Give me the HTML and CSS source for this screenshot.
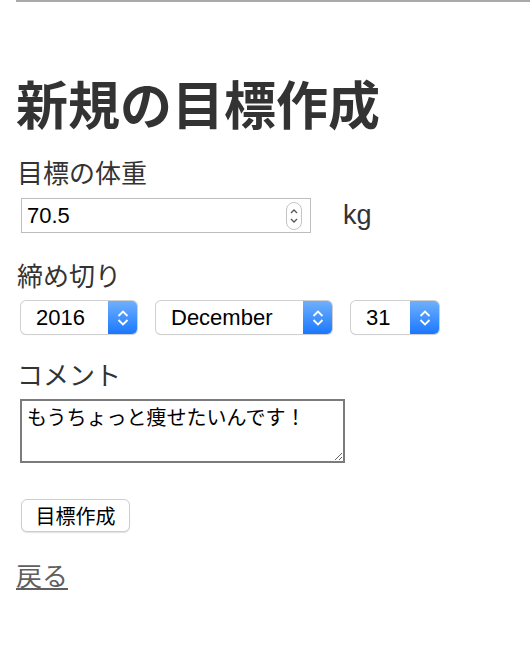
FILE: index.html
```html
<!DOCTYPE html>
<html lang="ja">
<head>
<meta charset="utf-8">
<link rel="stylesheet" href="styles.css">
</head>
<body>
<div class="page">
  <div class="topline"></div>
  <h1 class="title">新規の目標作成</h1>
  <form class="form">
    <div class="label label-first">目標の体重</div>
    <div class="row weight-row">
      <div class="num-input">
        <span class="num-value">70.5</span>
        <span class="spinner">
          <svg width="16" height="28" viewBox="0 0 16 28">
            <rect x="0.5" y="0.5" width="15" height="27" rx="7.5" fill="#fff" stroke="#c4c4c4"/>
            <path d="M5 11 L8 8 L11 11" fill="none" stroke="#555" stroke-width="1.3"/>
            <path d="M5 17 L8 20 L11 17" fill="none" stroke="#555" stroke-width="1.3"/>
          </svg>
        </span>
      </div>
      <span class="unit">kg</span>
    </div>

    <div class="label label-gap2">締め切り</div>
    <div class="row selects">
      <div class="select sel-year"><span class="sel-text">2016</span><span class="sel-arrow"><svg width="14" height="20" viewBox="0 0 14 20"><path d="M2.5 8 L7 3.5 L11.5 8" fill="none" stroke="#fff" stroke-width="1.8"/><path d="M2.5 12 L7 16.5 L11.5 12" fill="none" stroke="#fff" stroke-width="1.8"/></svg></span></div>
      <div class="select sel-month"><span class="sel-text">December</span><span class="sel-arrow"><svg width="14" height="20" viewBox="0 0 14 20"><path d="M2.5 8 L7 3.5 L11.5 8" fill="none" stroke="#fff" stroke-width="1.8"/><path d="M2.5 12 L7 16.5 L11.5 12" fill="none" stroke="#fff" stroke-width="1.8"/></svg></span></div>
      <div class="select sel-day"><span class="sel-text">31</span><span class="sel-arrow"><svg width="14" height="20" viewBox="0 0 14 20"><path d="M2.5 8 L7 3.5 L11.5 8" fill="none" stroke="#fff" stroke-width="1.8"/><path d="M2.5 12 L7 16.5 L11.5 12" fill="none" stroke="#fff" stroke-width="1.8"/></svg></span></div>
    </div>

    <div class="label label-gap3">コメント</div>
    <textarea class="comment">もうちょっと痩せたいんです！</textarea>

    <div class="actions">
      <button type="button" class="btn">目標作成</button>
    </div>
  </form>
  <a class="back" href="#">戻る</a>
</div>
</body>
</html>
```
FILE: styles.css
```css
* { box-sizing: border-box; }
html, body { margin: 0; padding: 0; background: #fff; }
body {
  font-family: "Liberation Sans", "Noto Sans CJK JP", sans-serif;
  color: #333;
}
.page {
  padding-left: 16px;
}
.topline {
  height: 2px;
  background: #a9a9a9;
}
.title {
  font-family: "Noto Sans CJK JP", sans-serif;
  font-weight: 700;
  font-size: 52px;
  line-height: 60px;
  margin: 71px 0 0 0;
  color: #333;
}
.form {
  margin: 0;
  padding-left: 5px;
}
.label {
  font-family: "Noto Sans CJK JP", sans-serif;
  font-size: 26px;
  line-height: 30px;
  margin: 0 0 0 -4px;
  color: #333;
}
.label-first { margin-top: 24px; }
.label-gap2 { margin-top: 27px; }
.label-gap3 { margin-top: 25px; }
.row {
  display: flex;
  align-items: center;
}
.weight-row { margin-top: 11px; }
.num-input {
  width: 290px;
  height: 35px;
  border: 1px solid #bdbdbd;
  display: flex;
  align-items: center;
  justify-content: space-between;
  padding: 0 8px 0 5px;
  background: #fff;
}
.num-value {
  font-size: 22px;
  color: #000;
}
.spinner { display: flex; }
.unit {
  font-size: 27px;
  margin-left: 32px;
  color: #333;
}
.selects {
  margin-top: 11px;
  gap: 19px;
}
.select {
  height: 33px;
  display: flex;
  border-radius: 5px;
  background: #fff;
  box-shadow: 0 0 0 1px #d0d0d0, 0 1px 1px rgba(0,0,0,0.18);
  overflow: hidden;
}
.sel-text {
  flex: 1;
  font-size: 22px;
  color: #000;
  display: flex;
  align-items: center;
  padding-left: 15px;
}
.sel-arrow {
  width: 29px;
  background: linear-gradient(#6fb0fc, #1a78ff);
  display: flex;
  align-items: center;
  justify-content: center;
}
.sel-year { width: 116px; }
.sel-month { width: 176px; }
.sel-day { width: 88px; }
.comment {
  display: block;
  margin: 10px 0 0 -1px;
  width: 325px;
  height: 64px;
  border: 2px solid #7b7b7b;
  padding: 3px 5px;
  font-family: "Noto Sans CJK JP", sans-serif;
  font-size: 20px;
  line-height: 26px;
  color: #000;
  resize: both;
  background: #fff;
}
.actions { margin-top: 36px; }
.btn {
  height: 33px;
  width: 109px;
  border: 1px solid #cdcdcd;
  border-radius: 6px;
  background: #fff;
  box-shadow: 0 1px 1px rgba(0,0,0,0.12);
  font-family: "Noto Sans CJK JP", sans-serif;
  font-size: 20px;
  line-height: 1;
  color: #000;
  padding: 0;
}
.back {
  display: inline-block;
  margin-top: 28px;
  font-family: "Noto Sans CJK JP", sans-serif;
  font-size: 26px;
  line-height: 30px;
  color: #5f5f5f;
  text-decoration: underline;
}
```
